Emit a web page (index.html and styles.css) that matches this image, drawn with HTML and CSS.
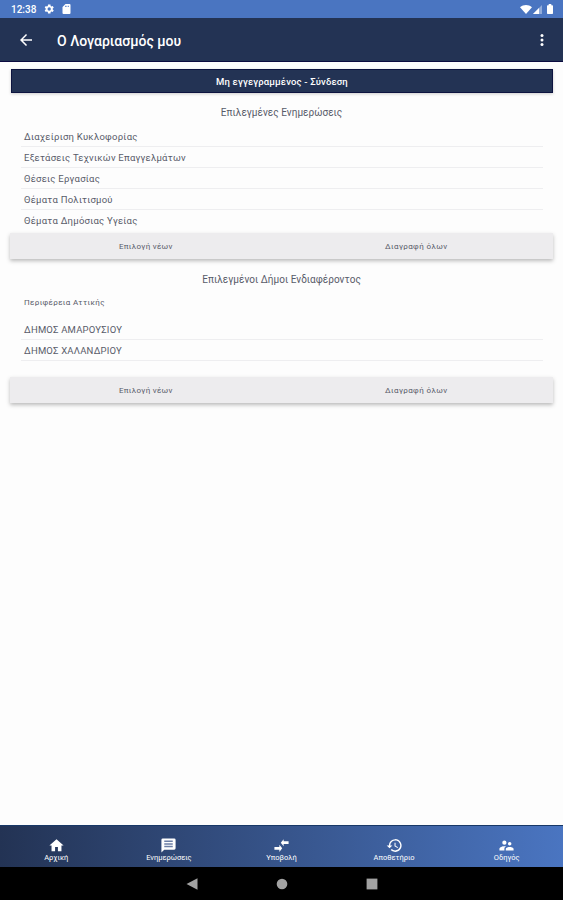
FILE: index.html
```html
<!DOCTYPE html>
<html lang="el">
<head>
<meta charset="utf-8">
<title>Ο Λογαριασμός μου</title>
<link rel="stylesheet" href="styles.css">
</head>
<body>
<div class="status">
  <span class="clock">12:38</span>
  <svg class="gear" viewBox="2 2 20 20"><path fill="#fff" fill-rule="evenodd" d="M19.4 13c.1-.7.1-1.300 0-2l2.100-1.600-2-3.500-2.500 1a7 7 0 0 0-1.700-1L15 3.200h-5l-.4 2.700a7 7 0 0 0-1.700 1l-2.500-1-2 3.500L5.500 11a8 8 0 0 0 0 2l-2.100 1.600 2 3.500 2.500-1a7 7 0 0 0 1.700 1l.4 2.700h5l.3-2.700a7 7 0 0 0 1.700-1l2.500 1 2-3.500zM12.400 15.300a3.300 3.300 0 1 1 0-6.600 3.300 3.300 0 0 1 0 6.600z"/></svg>
  <svg class="sd" viewBox="4 2 16 20"><path fill="#fff" fill-rule="evenodd" d="M18 2h-8L4 8v12a2 2 0 0 0 2 2h12a2 2 0 0 0 2-2V4a2 2 0 0 0-2-2zM9 5.500h1.500V8H9zm3 0h1.500V8H12zm3 0h1.500V8H15z"/></svg>
  <span class="spacer"></span>
  <svg class="wifi" viewBox="0 0 12 9"><path fill="#fff" d="M0 2.300C3.500-.7 8.500-.7 12 2.300L6 9z"/></svg>
  <svg class="signal" viewBox="0 0 9 9"><path fill="#fff" fill-opacity=".4" d="M0 9 9 0v9z"/><path fill="#fff" d="M0 9 6 3v6z"/></svg>
  <svg class="battery" viewBox="0 0 6 10"><path fill="#fff" d="M1.700 0h2.600v1.200H5.300q.7 0 .7.700v7.400q0 .7-.7.700H.7Q0 10 0 9.300V1.900q0-.7.7-.7h1z"/></svg>
</div>
<header class="appbar">
  <svg class="back" viewBox="4 4 16 16"><path fill="#fff" d="M20 11H7.800l5.600-5.600L12 4l-8 8 8 8 1.400-1.400L7.800 13H20z"/></svg>
  <h1 class="title">Ο Λογαριασμός μου</h1>
  <svg class="more" viewBox="0 0 4 14"><g fill="#fff"><circle cx="2" cy="2.400" r="1.500"/><circle cx="2" cy="7" r="1.500"/><circle cx="2" cy="11.600" r="1.500"/></g></svg>
</header>
<main class="content">
  <div class="login"><span>Μη εγγεγραμμένος - Σύνδεση</span></div>
  <h2 class="heading news">Επιλεγμένες Ενημερώσεις</h2>
  <ul class="list topics">
    <li>Διαχείριση Κυκλοφορίας</li>
    <li>Εξετάσεις Τεχνικών Επαγγελμάτων</li>
    <li>Θέσεις Εργασίας</li>
    <li>Θέματα Πολιτισμού</li>
    <li>Θέματα Δημόσιας Υγείας</li>
  </ul>
  <div class="actions"><span>Επιλογή νέων</span><span class="del">Διαγραφή όλων</span></div>
  <h2 class="heading towns">Επιλεγμένοι Δήμοι Ενδιαφέροντος</h2>
  <h3 class="region">Περιφέρεια Αττικής</h3>
  <ul class="list municipalities">
    <li>ΔΗΜΟΣ ΑΜΑΡΟΥΣΙΟΥ</li>
    <li>ΔΗΜΟΣ ΧΑΛΑΝΔΡΙΟΥ</li>
  </ul>
  <div class="actions"><span>Επιλογή νέων</span><span class="del">Διαγραφή όλων</span></div>
</main>
<nav class="tabs">
  <div class="tab"><svg viewBox="0 0 24 24"><path fill="#fff" d="M10 20v-6h4v6h5v-8h3L12 3 2 12h3v8z"/></svg><span>Αρχική</span></div>
  <div class="tab"><svg viewBox="0 0 24 24"><path fill="#fff" d="M20 2H4a2 2 0 0 0-2 2v18l4-4h14a2 2 0 0 0 2-2V4a2 2 0 0 0-2-2z"/><path fill="#6c7fa6" d="M6 5h12v2.200H6zm0 3.700h12v2.200H6zm0 3.700h12v2.200H6z"/></svg><span>Ενημερώσεις</span></div>
  <div class="tab"><svg viewBox="0 0 24 24"><path fill="#fff" d="M9 14H2v4h7v3l4-5-4-5zm6-1v-3h7V6h-7V3l-4 5z"/></svg><span>Υποβολή</span></div>
  <div class="tab"><svg viewBox="0 0 24 24"><path fill="#fff" d="M13 3a9 9 0 0 0-9 9H1l4 4 4-4H6a7 7 0 1 1 2.100 4.900l-1.400 1.500A9 9 0 1 0 13 3zm-1 5v5l4.300 2.500.7-1.200-3.500-2.100V8z"/></svg><span>Αποθετήριο</span></div>
  <div class="tab"><svg viewBox="0 0 24 24"><path fill="#fff" d="M16.500 12a2.500 2.500 0 1 0 0-5 2.500 2.500 0 0 0 0 5zM9 11a3 3 0 1 0 0-6 3 3 0 0 0 0 6zm7.500 3c-1.800 0-5.500.9-5.500 2.700V19h11v-2.300c0-1.800-3.700-2.700-5.500-2.700zM9 13c-2.300 0-7 1.200-7 3.500V19h7v-2.300c0-.8.300-2.300 2.400-3.500C10.500 13.100 9.600 13 9 13z"/></svg><span>Οδηγός</span></div>
</nav>
<div class="sysnav">
  <svg viewBox="0 0 12 12"><path fill="#a2a2a2" d="M11.500.2v11.600L.5 6z"/></svg>
  <svg viewBox="0 0 12 12"><circle fill="#a2a2a2" cx="6" cy="6" r="5.300"/></svg>
  <svg viewBox="0 0 12 12"><path fill="#a2a2a2" d="M.6.600h10.800v10.800H.6z"/></svg>
</div>
</body>
</html>
```
FILE: styles.css
```css
* { box-sizing: border-box; margin: 0; padding: 0; }
html, body { height: 100%; }
body {
  display: flex;
  flex-direction: column;
  height: 900px;
  background: #fdfdfd;
  color: #585b69;
  font-family: Roboto, "Noto Sans", sans-serif;
  overflow: hidden;
}
svg { display: block; flex: none; }
span, h1, h2, h3 { white-space: nowrap; }

.status {
  display: flex;
  align-items: center;
  flex: none;
  height: 18px;
  padding: 0 10px 0 11px;
  background: #4a75c1;
  color: #fff;
}
.clock { width: 33px; font-size: 10px; font-weight: 500; }
.gear { width: 10px; height: 10px; }
.sd { width: 9px; height: 10px; margin-left: 8px; }
.spacer { flex: 1; }
.wifi { width: 12px; height: 9px; }
.signal { width: 9px; height: 9px; margin-left: 1px; }
.battery { width: 6px; height: 10px; margin-left: 5px; }

.appbar {
  display: flex;
  align-items: center;
  flex: none;
  height: 44px;
  padding: 0 19px 0 20px;
  background: #233354;
  border-bottom: 1px solid #0b0b40;
  color: #fff;
}
.back { width: 12px; height: 12px; }
.title { flex: 1; margin-left: 25px; padding-top: 2px; font-size: 14px; font-weight: 500; }
.more { width: 4px; height: 14px; }

.content { flex: 1; padding: 7px 10px 0; }
.login {
  height: 24px;
  margin: 0 0 0 1px;
  background: #233354;
  border: 1px solid #0d1440;
  box-shadow: 0 1px 3px #0003;
  color: #fff;
  font-size: 9.500px;
  font-weight: 500;
  letter-spacing: .16px;
  line-height: 24px;
  text-align: center;
}
.heading { font-weight: 400; font-size: 10px; line-height: 14px; letter-spacing: .03px; text-align: center; }
.news { margin-top: 13px; }
.list { list-style: none; margin: 0 10px 0 11px; }
.list li {
  height: 21.100px;
  padding-left: 3px;
  border-bottom: 1px solid #eeeef0;
  font-size: 9.500px;
  letter-spacing: .25px;
  line-height: 21px;
}
.topics { height: 107px; margin-top: 6px; }
.topics li:last-child { border: 0; }
.actions {
  display: grid;
  grid-template-columns: 1fr 1fr;
  height: 26px;
  background: #edecee;
  box-shadow: 0 2px 4px #0004;
  font-size: 8px;
  letter-spacing: .3px;
  line-height: 28px;
  text-align: center;
}
.actions .del { padding-right: 2px; letter-spacing: .4px; }
.towns { margin-top: 14px; }
.region { margin: 10px 0 0 14px; font-size: 8px; font-weight: 400; letter-spacing: .37px; line-height: 12px; }
.municipalities { height: 58px; margin-top: 10px; }
.municipalities li { letter-spacing: .2px; }

.tabs {
  display: grid;
  grid-template-columns: repeat(5, 1fr);
  flex: none;
  height: 42px;
  border-top: 1px solid #183867;
  background: linear-gradient(90deg, #233354, #4a75c1);
  color: #fff;
}
.tab { display: flex; flex-direction: column; align-items: center; padding-top: 11px; font-size: 7.500px; line-height: 9px; }
.tab svg { width: 17px; height: 17px; }
.tab span { margin-top: -1px; }
.sysnav {
  display: flex;
  justify-content: center;
  gap: 78px;
  flex: none;
  height: 33px;
  padding-top: 10.500px;
  background: #000;
}
.sysnav svg { width: 12px; height: 12px; }
```
